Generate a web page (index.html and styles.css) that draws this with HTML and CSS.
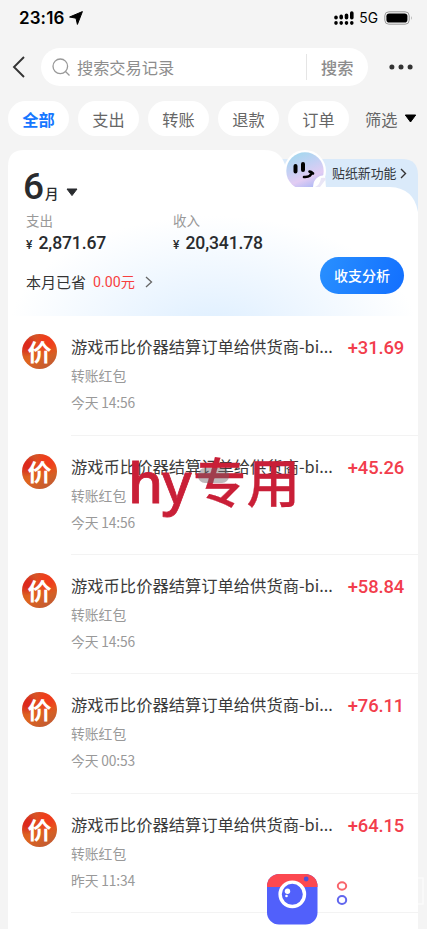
FILE: index.html
```html
<!DOCTYPE html>
<html lang="zh-CN">
<head>
<meta charset="utf-8">
<title>账单</title>
<link rel="stylesheet" href="styles.css">
</head>
<body>
<div class="phone">
  <header class="status">
    <div class="clock"><span>23:16</span>
      <svg width="14" height="14" viewBox="0 0 14 14"><path d="M13.4.6 8.4 13.4 7 7.2.6 6Z" fill="#000" stroke="#000" stroke-linejoin="round"/></svg>
    </div>
    <div class="signals">
      <svg width="20" height="14" viewBox="0 0 20 14"><g stroke="#000" stroke-width="3.6" stroke-linecap="round"><path d="M2 11.9v.2M7.2 11.9v.2M12.5 11.9v.2M17.8 11.9v.2"/><path d="M2 6.200v.6M7.2 5.400v1.400M12.5 4.200v2.600M17.8 2v4.800"/></g></svg>
      <span class="net">5G</span>
      <svg width="29" height="14" viewBox="0 0 29 14"><rect x=".8" y=".8" width="24.4" height="12.4" rx="4" fill="none" stroke="#999"/><rect x="2.4" y="2.4" width="21" height="9.2" rx="2.8"/><path d="M27 5v4q1.4-2 0-4" fill="#999"/></svg>
    </div>
  </header>

  <div class="searchbar">
    <svg class="back" width="14" height="22" viewBox="0 0 14 22"><path d="M12 1 2 11 12 21" fill="none" stroke="#333" stroke-width="1.9"/></svg>
    <div class="field">
      <svg width="19" height="19" viewBox="0 0 19 19"><g fill="none" stroke="#999" stroke-width="1.3"><circle cx="8.3" cy="8.3" r="7.3"/><path d="m13.5 13.5 4 4"/></g></svg>
      <span class="hint">搜索交易记录</span>
      <span class="go">搜索</span>
    </div>
    <svg class="more" width="24" height="6" viewBox="0 0 24 6"><g fill="#333"><circle cx="2.9" cy="3" r="2.5"/><circle cx="12" cy="3" r="2.5"/><circle cx="21.1" cy="3" r="2.5"/></g></svg>
  </div>

  <nav class="tabs">
    <span class="tab active">全部</span><span class="tab">支出</span><span class="tab">转账</span><span class="tab">退款</span><span class="tab">订单</span>
    <span class="filter">筛选<svg width="13" height="9" viewBox="0 0 13 9"><path d="M1.3 1h10.4L6.5 8Z" stroke="#000" stroke-linejoin="round"/></svg></span>
  </nav>

  <main class="card">
    <section class="summary">
      <svg class="shape" width="410" height="166" viewBox="0 0 410 166">
        <defs>
          <radialGradient id="glow" gradientUnits="userSpaceOnUse" cx="0" cy="0" r="1" gradientTransform="translate(205 186) scale(205 120)"><stop offset="0" stop-color="#dceeff"/><stop offset=".35" stop-color="#e9f4ff"/><stop offset="1" stop-color="#fff"/></radialGradient>
          <linearGradient id="face" x1=".25" y1="0" x2=".65" y2="1"><stop offset="0" stop-color="#a3d8ee"/><stop offset=".4" stop-color="#c5d0f4"/><stop offset=".7" stop-color="#e2ccf3"/><stop offset="1" stop-color="#a9b8f5"/></linearGradient>
          <clipPath id="above"><path d="M270 0h60v37h-60Z"/></clipPath>
        </defs>
        <path d="M268 9H394Q410 9 410 25V62H268Z" fill="#daeafa"/>
        <path d="M0 166V16Q0 0 16 0H256C270 0 275 7 278 18Q283 37 302 37H382Q406 38 410 62V166Z" fill="url(#glow)"/>
        <g clip-path="url(#above)">
          <circle cx="297" cy="21" r="21" fill="#fff"/>
          <circle cx="297" cy="21" r="18.700" fill="url(#face)"/>
          <path d="M305 38Q305 26 317 25L318 38Z" fill="#fff"/>
          <path d="M307 37Q312 35 313 28Q318 27 318 29L312 37Z" fill="#e9e6f6"/>
        </g>
        <path d="M287.500 16v5.500M295 14v6" stroke="#000" stroke-width="4" stroke-linecap="round"/>
        <path d="M296 27q7 .5 7.500-5M301.500 21.500l3.500 2" fill="none" stroke="#000" stroke-width="2.600" stroke-linecap="round"/>
      </svg>
      <div class="sticker">贴纸新功能<svg width="7" height="11" viewBox="0 0 7 11"><path d="m1 1 4.500 4.500L1 10" fill="none" stroke="#333" stroke-width="1.400"/></svg></div>
      <div class="month"><b>6</b><span>月</span><svg width="12" height="9" viewBox="0 0 12 9"><path d="M1 1h10L6 7.600Z" fill="#292b2e" stroke="#292b2e" stroke-linejoin="round"/></svg></div>
      <div class="totals">
        <div><div class="label">支出</div><div class="sum"><i>¥</i>2,871.67</div></div>
        <div><div class="label">收入</div><div class="sum"><i>¥</i>20,341.78</div></div>
      </div>
      <div class="saved">本月已省<em>0.00元</em><svg width="8" height="12" viewBox="0 0 8 12"><path d="m1 1 5.500 5L1 11" fill="none" stroke="#666" stroke-width="1.300"/></svg></div>
      <div class="analyse">收支分析</div>
    </section>

    <section class="list">
      <article class="row"><span class="avatar">价</span><div class="info"><div class="line"><h3>游戏币比价器结算订单给供货商-bi...</h3><strong>+31.69</strong></div><p>转账红包</p><p class="time">今天 14:56</p></div></article>
      <article class="row"><span class="avatar">价</span><div class="info"><div class="line"><h3>游戏币比价器结算订单给供货商-bi...</h3><strong>+45.26</strong></div><p>转账红包</p><p class="time">今天 14:56</p></div></article>
      <article class="row"><span class="avatar">价</span><div class="info"><div class="line"><h3>游戏币比价器结算订单给供货商-bi...</h3><strong>+58.84</strong></div><p>转账红包</p><p class="time">今天 14:56</p></div></article>
      <article class="row"><span class="avatar">价</span><div class="info"><div class="line"><h3>游戏币比价器结算订单给供货商-bi...</h3><strong>+76.11</strong></div><p>转账红包</p><p class="time">今天 00:53</p></div></article>
      <article class="row"><span class="avatar">价</span><div class="info"><div class="line"><h3>游戏币比价器结算订单给供货商-bi...</h3><strong>+64.15</strong></div><p>转账红包</p><p class="time">昨天 11:34</p></div></article>
    </section>
  </main>

  <div class="mark"><span>hy</span>专用</div>
  <span class="smudge"></span>
  <svg class="camera" width="160" height="55" viewBox="0 0 160 55">
    <defs><clipPath id="body"><rect x="0" y="1" width="50.500" height="50.500" rx="12"/></clipPath></defs>
    <g clip-path="url(#body)"><path d="M0 0h51v52H0Z" fill="#5160fb"/><path d="M0 0h51v14H0Z" fill="#fc4850"/></g>
    <circle cx="39.200" cy="6" r="2.400" fill="#4d51d8"/>
    <circle cx="25.300" cy="21.300" r="12.200" fill="#5160fb" stroke="#fff" stroke-width="3.400"/>
    <circle cx="20.500" cy="18.200" r="2.700" fill="#fff"/><circle cx="19.500" cy="23" r="1.300" fill="#fff"/>
    <g fill="none" stroke-width="2"><ellipse cx="75" cy="13" rx="4.200" ry="3.700" stroke="#f8656b"/><ellipse cx="75" cy="27" rx="4.200" ry="3.900" stroke="#6166ee"/></g>
    <path d="M151 5h5v26h-5" fill="none" stroke="#fafafa" stroke-width="1.500"/>
  </svg>
</div>
</body>
</html>
```
FILE: styles.css
```css
* { box-sizing: border-box; margin: 0; padding: 0; }
body { background: #f4f4f4; font-family: "Noto Sans CJK SC", sans-serif; color: #333; }
.phone { position: relative; width: 427px; height: 929px; overflow: hidden; }
svg { display: block; flex: none; }

.status { display: flex; justify-content: space-between; align-items: center; height: 35px; padding: 0 14px 0 19px; font-family: Inter, sans-serif; color: #000; }
.clock { display: flex; align-items: center; gap: 5px; font-size: 17px; font-weight: 600; letter-spacing: 0.1px; }
.signals { display: flex; align-items: center; }
.net { margin: 0 6px 0 5px; font-size: 13.800px; font-weight: 400; }

.searchbar { display: flex; align-items: center; height: 38px; margin-top: 13px; padding-left: 12px; }
.field { display: flex; align-items: center; width: 327px; height: 38px; margin-left: 15px; padding-left: 11px; border-radius: 19px; background: #fff; }
.hint { flex: 1; margin-left: 6px; font-size: 16.200px; line-height: 24px; color: #8d8d8d; }
.go { width: 62px; border-left: 1px solid #e5e5e5; padding-left: 14px; font-size: 16.200px; line-height: 26px; font-weight: 500; color: #8c8c8c; }
.more { margin-left: 21px; }

.tabs { display: flex; align-items: center; gap: 9px; height: 35px; margin-top: 15px; padding-left: 8px; }
.tab { flex: none; width: 61px; height: 35px; border-radius: 18px; background: #fff; color: #666; font-size: 16.200px; line-height: 36px; text-align: center; }
.active { color: #1677ff; font-weight: 700; }
.filter { display: flex; align-items: center; gap: 7px; margin-left: 7px; white-space: nowrap; font-size: 16.200px; line-height: 36px; color: #666; }

.card { width: 410px; margin: 14px 0 0 8px; }
.summary { position: relative; height: 166px; padding-left: 18px; }
.shape { position: absolute; left: 0; top: 0; }
.sticker { position: absolute; left: 324px; top: 13px; display: flex; align-items: center; gap: 4px; font-size: 12.900px; line-height: 20px; color: #33373c; white-space: nowrap; }
.month { position: relative; display: flex; align-items: flex-end; height: 56px; margin-left: -3px; color: #292b2e; }
.month b { width: 20px; margin-bottom: 1px; font: 500 37px/36px Roboto, sans-serif; }
.month span { margin: 0 7px 3px 2px; font-size: 13.500px; line-height: 20px; font-weight: 500; }
.month svg { margin-bottom: 9px; }
.totals { position: relative; display: flex; margin-top: 4px; }
.totals > div { width: 147px; }
.label { font-size: 13.500px; line-height: 20px; color: #999; }
.sum { font: 500 17.600px/26px Roboto, sans-serif; letter-spacing: -0.150px; color: #292b2e; white-space: nowrap; }
.sum i { display: inline-block; width: 12.500px; font-size: 12px; font-style: normal; }
.saved { position: relative; display: flex; align-items: center; margin-top: 12px; font-size: 15px; line-height: 24px; color: #333; }
.saved em { margin: 0 10px 0 7px; font-family: Roboto, "Noto Sans CJK SC", sans-serif; font-size: 14.200px; font-style: normal; color: #f7403f; }
.analyse { position: absolute; left: 312px; top: 107px; width: 84px; height: 37px; border-radius: 19px; background: linear-gradient(110deg, #2990ff, #126fff); color: #fff; font-size: 14px; font-weight: 500; line-height: 37px; text-align: center; }

.list { background: #fff; height: 640px; }
.row { display: flex; height: 119.300px; padding-left: 14px; }
.row:first-child { height: 119.800px; }
.avatar { flex: none; width: 35px; height: 35px; margin: 18px 14px 0 0; border-radius: 50%; background: radial-gradient(circle at 72% 22%, #ef3d1c 0 12%, transparent 38%), radial-gradient(circle at 14% 32%, #dc2a1c 0 8%, transparent 30%), linear-gradient(150deg, #c94e2c, #e0641d 55%, #b8583a); color: #fff; font-size: 24px; font-weight: 700; line-height: 34px; text-align: center; }
.info { flex: 1; padding-top: 17px; border-bottom: 1px solid #f3f3f3; }
.line { display: flex; justify-content: space-between; padding-right: 14px; height: 27px; white-space: nowrap; }
.line h3 { font-size: 16.300px; font-weight: 400; line-height: 26px; color: #3a3a3a; }
.line strong { font: 500 18.400px/30px Roboto, sans-serif; letter-spacing: -0.150px; color: #f23d4c; }
.info p { margin-top: 4px; font-size: 13.800px; line-height: 23px; color: #999; }
.info .time { letter-spacing: -0.150px; }

.mark { position: absolute; left: 128px; top: 443px; font-size: 53.500px; line-height: 74px; font-weight: 500; color: #c91f37; white-space: nowrap; -webkit-text-stroke: 0.3px #c91f37; }
.mark span { display: inline-block; width: 65px; font-family: "Noto Sans", sans-serif; font-size: 56px; letter-spacing: -1px; -webkit-text-stroke-width: 0.8px; }
.smudge { position: absolute; left: 198px; top: 468px; width: 31px; height: 15px; border-radius: 7px; background: rgba(110, 100, 105, 0.45); }
.camera { position: absolute; left: 267px; top: 873px; }
```
